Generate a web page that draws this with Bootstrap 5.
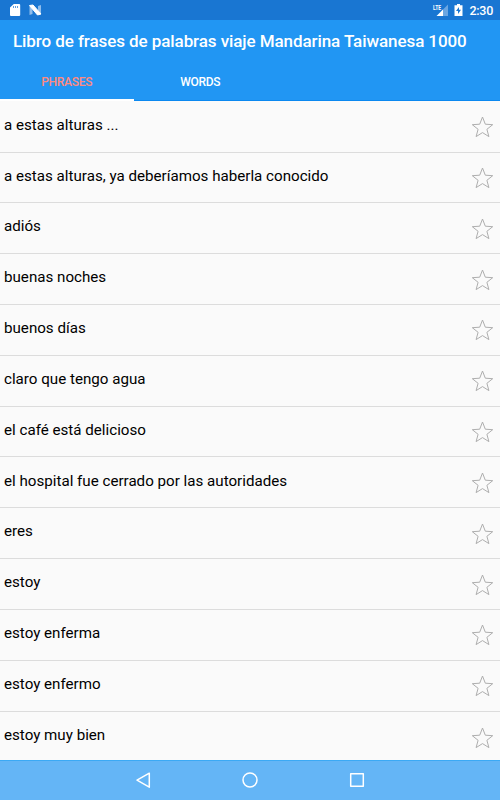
<!DOCTYPE html>
<html lang="es">
<head>
<meta charset="utf-8">
<meta name="viewport" content="width=device-width, initial-scale=1">
<title>Libro de frases</title>
<link href="https://cdn.jsdelivr.net/npm/bootstrap@5.3.0/dist/css/bootstrap.min.css" rel="stylesheet">
<style>
body{font-family:Roboto,sans-serif;background:#fafafa;color:#000}
.screen{width:500px;height:800px}
.statusbar{height:20px;background:#1976d2;padding:0 7px 0 9px;font-size:12.5px;font-weight:500}
.clock{padding-top:2px;letter-spacing:-.25px;font-size:12.5px}
.appbar{height:81px;background:#2196f3;border-bottom:1px solid #0b88f0}
.app-title{height:43px;padding:1px 0 0 13px;font-size:17px;font-weight:500;letter-spacing:-.08px}
.tabs-row{height:38px}
.tab-item{width:133.5px;height:38px;font-size:12px;font-weight:500;letter-spacing:-.25px;color:#fff}
.tab-item.current{color:#ff8a80;padding-top:2px;border-bottom:2px solid #fff}
.phrase-list{padding-top:.7px}
.phrase-row{height:50.83px;border-bottom:1px solid #dcdcdc;padding:0 6px 3px 4px;font-size:15.15px}
.phrase-row:last-child{border-bottom:0}
.star{margin-top:4px}
.navkeys{height:40px;background:#64b5f6;border-top:1px solid #3ba9f5}
</style>
</head>
<body>
<div class="screen d-flex flex-column overflow-hidden">
<div class="statusbar d-flex align-items-center justify-content-between text-white flex-shrink-0">
<svg width="34" height="20"><path d="M4.800 4h5.400q1 0 1 1v10q0 1-1 1H2q-1 0-1-1V7.600z" fill="#fff"/><path d="M4.500 6v2M6.500 6v2M8.500 6v2" stroke="#1976d2" stroke-width=".7"/><path d="M20.500 6l3-1v9l-3 1zM29 6l3-1v9l-3 1z" fill="#8fbdec"/><path d="M20.500 5.500L24 5 32 14 28.500 15z" fill="#fff" stroke="#fff" stroke-width="1"/></svg>
<div class="d-flex align-items-center">
<svg width="37" height="20"><text x="1" y="9.500" font-size="7.500" font-weight="700" fill="#fff" textLength="8" lengthAdjust="spacingAndGlyphs">LTE</text><path d="M16 4.500V16H10.500V10z" fill="#6ba6e2"/><path d="M11 9.500V16H4.500z" fill="#fff"/><path d="M25 4h3v1.300h2.500V16h-8V5.300H25z" fill="#fff"/><path d="M27 7l-3 4h2v3l3-4.200h-2z" fill="#1976d2"/></svg>
<span class="clock">2:30</span>
</div>
</div>
<header class="appbar flex-shrink-0 text-white">
<div class="app-title d-flex align-items-center text-nowrap">Libro de frases de palabras viaje Mandarina Taiwanesa 1000</div>
<div class="tabs-row d-flex">
<div class="tab-item current d-flex align-items-center justify-content-center">PHRASES</div>
<div class="tab-item d-flex align-items-center justify-content-center">WORDS</div>
</div>
</header>
<main id="phrases" class="phrase-list flex-grow-1 overflow-hidden"></main>
<footer class="navkeys d-flex flex-shrink-0">
<svg width="500" height="39" fill="none" stroke="#fff" stroke-width="1.500" stroke-linejoin="round"><path d="M137 19.200L149.300 12.200V26.200z"/><circle cx="250" cy="19" r="7"/><path d="M350.700 12.700h12.600v12.600h-12.600z"/></svg>
</footer>
</div>
<script>
const phrases=["a estas alturas ...","a estas alturas, ya deberíamos haberla conocido","adiós","buenas noches","buenos días","claro que tengo agua","el café está delicioso","el hospital fue cerrado por las autoridades","eres","estoy","estoy enferma","estoy enfermo","estoy muy bien"];
document.getElementById('phrases').innerHTML=phrases.map(t=>`<div class="phrase-row d-flex align-items-center justify-content-between text-nowrap"><span>${t}</span><svg class="star" width="23" height="22" viewBox="0 0 23 22" fill="none" stroke="#aeaeae" stroke-width="1" stroke-linejoin="round"><path d="M11.500 1L14.300 8.200 21.700 8.700 15.900 13.300 17.900 20.600 11.500 16.600 5.100 20.600 7.100 13.300 1.300 8.700 8.700 8.200z"/></svg></div>`).join('');
</script>
<script src="https://cdn.jsdelivr.net/npm/bootstrap@5.3.0/dist/js/bootstrap.bundle.min.js"></script>
</body>
</html>
